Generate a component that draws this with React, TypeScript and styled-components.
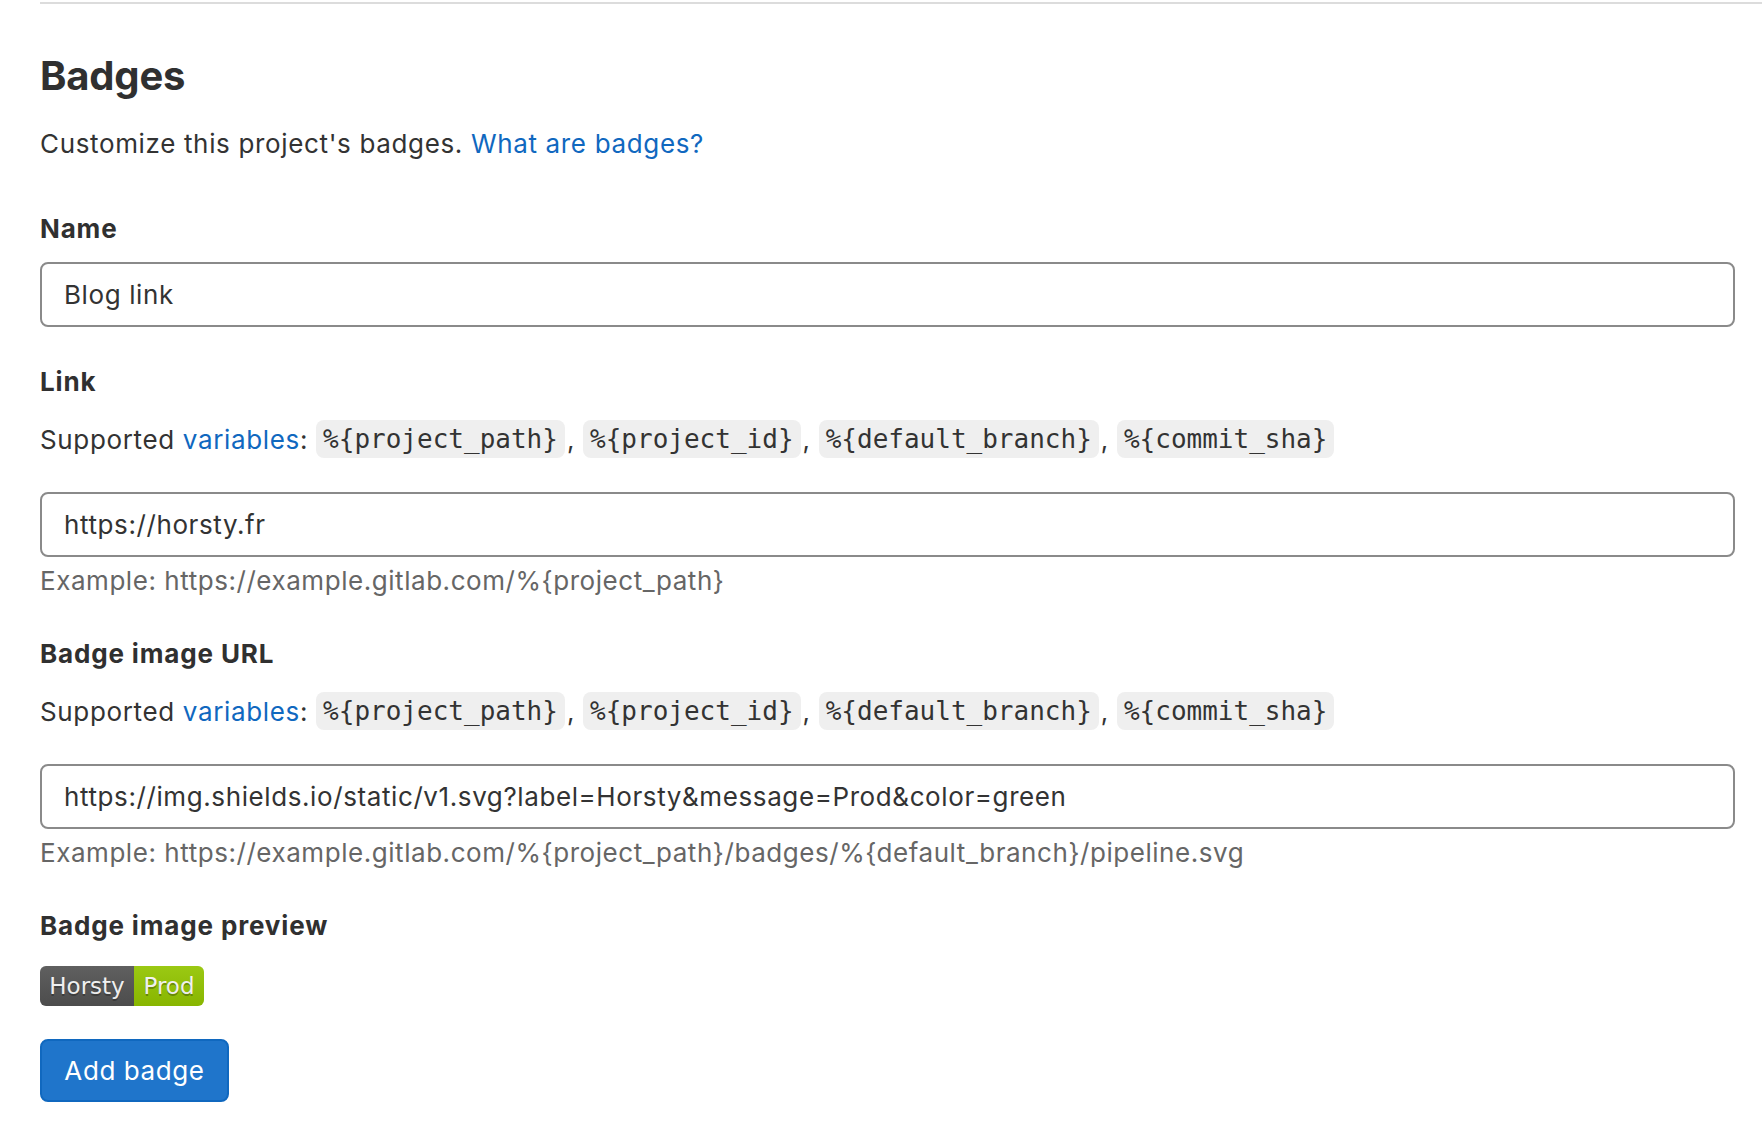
import React from "react";
import styled, { createGlobalStyle } from "styled-components";

const Global = createGlobalStyle`
  html, body {
    margin: 0;
    padding: 0;
    background: #ffffff;
  }
  body {
    font-family: Inter, "Noto Sans", "Liberation Sans", sans-serif;
    color: #333333;
  }
`;

const Page = styled.div`
  padding: 2px 0 40px 40px;
`;

const Divider = styled.div`
  height: 2px;
  background: #dcdcdc;
`;

const Form = styled.div`
  padding-right: 27px;
  display: flex;
  flex-direction: column;
`;

const Title = styled.h2`
  margin: 48px 0 0;
  font-size: 40px;
  line-height: 48px;
  font-weight: 700;
  color: #303030;
  letter-spacing: -0.2px;
`;

const Text = styled.p`
  margin: 0;
  font-size: 26px;
  line-height: 36px;
  letter-spacing: 0.65px;
`;

const Intro = styled(Text)`
  margin-top: 26px;
`;

const Link = styled.a`
  color: #1068bf;
  text-decoration: none;
`;

const Group = styled.div<{ $first?: boolean }>`
  display: flex;
  flex-direction: column;
  margin-top: ${(p) => (p.$first ? "49px" : "37px")};
`;

const Label = styled.label`
  font-size: 26px;
  line-height: 36px;
  font-weight: 700;
  letter-spacing: 0.85px;
  color: #303030;
`;

const Vars = styled.div`
  margin-top: 20px;
  display: flex;
  align-items: center;
  height: 38px;
  font-size: 26px;
  letter-spacing: 0.65px;
  white-space: pre;
`;

const Comma = styled.span`
  margin-left: 2px;
`;

const Code = styled.code`
  display: inline-flex;
  align-items: center;
  height: 38px;
  padding: 0 7px;
  margin-left: 8px;
  border-radius: 8px;
  background: #efefef;
  font-family: "DejaVu Sans Mono", "Liberation Mono", monospace;
  font-size: 26px;
  letter-spacing: 0;
  color: #333333;
`;

const Input = styled.input<{ $gap?: number }>`
  box-sizing: border-box;
  width: 100%;
  height: 65px;
  margin-top: ${(p) => p.$gap ?? 15}px;
  padding: 0 22px;
  border: 2px solid #8a8a8a;
  border-radius: 8px;
  font-family: inherit;
  font-size: 26px;
  letter-spacing: 0.6px;
  color: #333333;
  background: #fff;
  outline: none;
`;

const Hint = styled.p`
  margin: 6px 0 0;
  font-size: 26px;
  line-height: 36px;
  letter-spacing: 0.55px;
  color: #666666;
`;

const Badge = styled.div`
  margin-top: 22px;
  display: inline-flex;
  align-self: flex-start;
  height: 40px;
  border-radius: 6px;
  overflow: hidden;
  position: relative;
  font-family: "DejaVu Sans", Verdana, sans-serif;
  font-size: 23px;
  color: #fff;
  &::after {
    content: "";
    position: absolute;
    inset: 0;
    background: linear-gradient(rgba(187, 187, 187, 0.1), rgba(0, 0, 0, 0.1));
  }
`;

const BadgePart = styled.span<{ $bg: string; $w: number }>`
  display: flex;
  align-items: center;
  justify-content: center;
  width: ${(p) => p.$w}px;
  background: ${(p) => p.$bg};
  text-shadow: 0 2px 0 rgba(1, 1, 1, 0.3);
`;

const Button = styled.button`
  margin-top: 33px;
  align-self: flex-start;
  box-sizing: border-box;
  height: 63px;
  width: 189px;
  border: 2px solid #1068bf;
  border-radius: 8px;
  background: #1f75cb;
  color: #fff;
  font-family: inherit;
  font-size: 26px;
  letter-spacing: 0.6px;
  cursor: pointer;
`;

const variables = ["%{project_path}", "%{project_id}", "%{default_branch}", "%{commit_sha}"];

const VarsRow = () => (
  <Vars>
    <span>
      Supported <Link href="#">variables</Link>:
    </span>
    {variables.map((v, i) => (
      <React.Fragment key={v}>
        <Code>{v}</Code>
        {i < variables.length - 1 && <Comma>,</Comma>}
      </React.Fragment>
    ))}
  </Vars>
);

export default function App() {
  return (
    <>
      <Global />
      <Page>
        <Divider />
        <Form>
          <Title>Badges</Title>
          <Intro>
            Customize this project's badges. <Link href="#">What are badges?</Link>
          </Intro>

          <Group $first>
            <Label>Name</Label>
            <Input defaultValue="Blog link" />
          </Group>

          <Group>
            <Label>Link</Label>
            <VarsRow />
            <Input $gap={34} defaultValue="https://horsty.fr" />
            <Hint>Example: https://example.gitlab.com/%{"{"}project_path{"}"}</Hint>
          </Group>

          <Group>
            <Label>Badge image URL</Label>
            <VarsRow />
            <Input
              $gap={34}
              defaultValue="https://img.shields.io/static/v1.svg?label=Horsty&message=Prod&color=green"
            />
            <Hint>
              Example: https://example.gitlab.com/%{"{"}project_path{"}"}/badges/%{"{"}default_branch{"}"}/pipeline.svg
            </Hint>
          </Group>

          <Group>
            <Label>Badge image preview</Label>
            <Badge>
              <BadgePart $bg="#555555" $w={94}>Horsty</BadgePart>
              <BadgePart $bg="#97ca00" $w={70}>Prod</BadgePart>
            </Badge>
            <Button>Add badge</Button>
          </Group>
        </Form>
      </Page>
    </>
  );
}
